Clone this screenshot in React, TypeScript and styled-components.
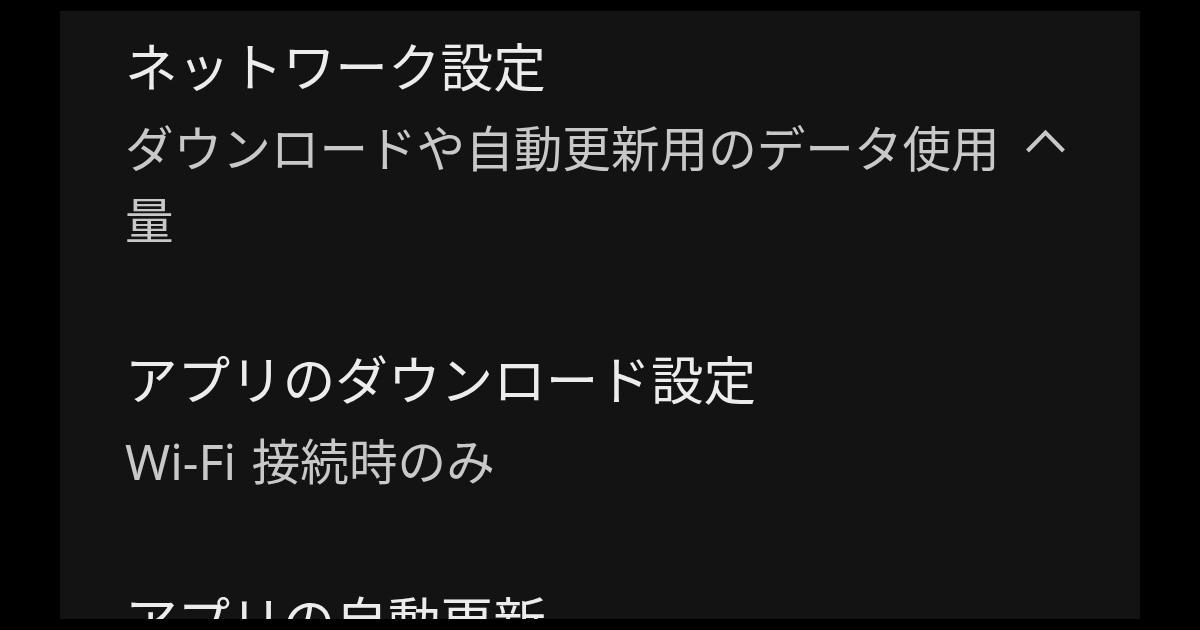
import React, { FC } from 'react';
import styled, { createGlobalStyle } from 'styled-components';

const PAGE_BG = '#000000';
const PANEL_BG = '#131313';
const TITLE = '#ececec';
const SUBTITLE = '#c8c8c8';

const GlobalStyle = createGlobalStyle`
  html, body {
    margin: 0;
    padding: 0;
    background: ${PAGE_BG};
  }
  body {
    font-family: 'Noto Sans', 'Noto Sans CJK JP', sans-serif;
  }
`;

const Screen = styled.div`
  width: 1200px;
  height: 630px;
  padding-top: 11px;
  box-sizing: border-box;
  display: flex;
  justify-content: center;
  overflow: hidden;
`;

const Panel = styled.div`
  width: 1080px;
  height: 608px;
  box-sizing: border-box;
  padding: 24px 73px 0 65px;
  background: ${PANEL_BG};
  overflow: hidden;
  display: flex;
  flex-direction: column;
  gap: 92px;
`;

const Item = styled.div`
  display: flex;
  align-items: flex-start;
`;

const TextBlock = styled.div`
  flex: 1;
  min-width: 0;
  display: flex;
  flex-direction: column;
  gap: 13px;
`;

const Title = styled.div`
  font-family: 'Noto Sans', 'Noto Sans CJK JP', sans-serif;
  font-size: 52.6px;
  line-height: 64px;
  color: ${TITLE};
`;

const Summary = styled.div`
  font-family: 'Noto Sans', 'Noto Sans CJK JP', sans-serif;
  font-size: 48.6px;
  line-height: 72px;
  color: ${SUBTITLE};
  word-spacing: 3px;
`;

const Toggle = styled.div<{ $offset: number }>`
  flex: none;
  width: 42px;
  height: 26px;
  margin-left: 21px;
  margin-top: ${p => p.$offset}px;
  color: ${SUBTITLE};

  svg {
    display: block;
    width: 100%;
    height: 100%;
  }
`;

// thin up-chevron, drawn as a stroke so its weight matches the text
const ExpandLess: FC = () => (
  <svg viewBox="0 0 42 26" fill="none" stroke="currentColor" strokeWidth={4}>
    <polyline points="2.5,23 20.5,4.5 38.5,23" strokeLinejoin="miter" />
  </svg>
);

type Pref = {
  title: string;
  summary: string;
  expandable?: boolean;
};

const prefs: Pref[] = [
  {
    title: 'ネットワーク設定',
    summary: 'ダウンロードや自動更新用のデータ使用量',
    expandable: true,
  },
  {
    title: 'アプリのダウンロード設定',
    summary: 'Wi-Fi 接続時のみ',
  },
  {
    title: 'アプリの自動更新',
    summary: 'Wi-Fi 接続時のみ',
  },
];

const App: FC = () => (
  <>
    <GlobalStyle />
    <Screen>
      <Panel>
        {prefs.map(pref => (
          <Item key={pref.title}>
            <TextBlock>
              <Title>{pref.title}</Title>
              <Summary>{pref.summary}</Summary>
            </TextBlock>
            {pref.expandable && (
              <Toggle $offset={93}>
                <ExpandLess />
              </Toggle>
            )}
          </Item>
        ))}
      </Panel>
    </Screen>
  </>
);

export default App;
